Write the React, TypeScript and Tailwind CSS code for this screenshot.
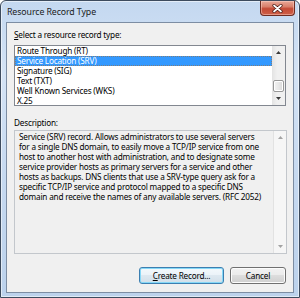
import React from "react";

const items = [
  "Route Through (RT)",
  "Service Location (SRV)",
  "Signature (SIG)",
  "Text (TXT)",
  "Well Known Services (WKS)",
  "X.25",
];

const desc = [
  "Service (SRV) record. Allows administrators to use several servers",
  "for a single DNS domain, to easily move a TCP/IP service from one",
  "host to another host with administration, and to designate some",
  "service provider hosts as primary servers for a service and other",
  "hosts as backups. DNS clients that use a SRV-type query ask for a",
  "specific TCP/IP service and protocol mapped to a specific DNS",
  "domain and receive the names of any available servers. (RFC 2052)",
];

function Up({ color }: { color: string }) {
  return (
    <svg width="5" height="3" viewBox="0 0 5 3">
      <path d="M0 3 L2.5 0 L5 3 Z" fill={color} />
    </svg>
  );
}
function Down({ color }: { color: string }) {
  return (
    <svg width="5" height="3" viewBox="0 0 5 3">
      <path d="M0 0 L2.5 3 L5 0 Z" fill={color} />
    </svg>
  );
}

export default function App() {
  return (
    <div className="w-[300px] h-[298px] flex flex-col border border-[#3d4b5e] rounded-t-[6px] overflow-hidden bg-[linear-gradient(180deg,#c4d8f0_0%,#d4e3f5_25%,#c6d9f0_60%,#bcd2ec_100%)] shadow-[inset_0_0_0_1px_rgba(255,255,255,0.55)] font-['Noto_Sans',sans-serif] text-black">
      {/* Title bar */}
      <div className="h-[21px] flex items-start justify-between pl-[6px] pr-[4px]">
        <span className="mt-[6px] text-[8.8px] leading-[10px] tracking-[-0.1px] text-[#1a1a1a]">
          Resource Record Type
        </span>
        <div className="w-[35px] h-[15px] rounded-b-[4px] border border-t-0 border-[#6e2c22] bg-[linear-gradient(180deg,#e9a898_0%,#d9806c_40%,#c44a36_55%,#cf6048_100%)] shadow-[inset_0_0_0_1px_rgba(255,220,210,0.45)] flex items-center justify-center">
          <svg width="11" height="9" viewBox="0 0 11 9">
            <path d="M2 1.5 L9 7.5 M9 1.5 L2 7.5" stroke="#4a1a14" strokeWidth="3.2" strokeLinecap="round" />
            <path d="M2 1.5 L9 7.5 M9 1.5 L2 7.5" stroke="#ffffff" strokeWidth="1.7" strokeLinecap="round" />
          </svg>
        </div>
      </div>

      {/* Client area */}
      <div className="mx-[5px] h-[271px] border border-[#7d8da3] bg-[#f0f0f0] flex flex-col pl-[7px] pr-[6px] text-[8.2px] leading-[10px] tracking-[-0.2px]">
        <div className="mt-[7px] h-[10px] whitespace-nowrap">
          <span className="underline">S</span>elect a resource record type:
        </div>

        {/* List box */}
        <div className="mt-[5px] mr-[1px] h-[61px] border border-[#828790] bg-white flex">
          <div className="flex-1 flex flex-col overflow-hidden">
            {items.map((it, i) => (
              <div
                key={it}
                className={
                  i === 1
                    ? "h-[10px] shrink-0 whitespace-nowrap bg-[#3399ff] text-white border border-dotted border-[#7d7d7d] pl-[1px] leading-[8px]"
                    : "h-[10px] shrink-0 pl-[2px] whitespace-nowrap"
                }
              >
                {it}
              </div>
            ))}
          </div>
          <div className="w-[13px] flex flex-col bg-[linear-gradient(90deg,#e3e3e3_0%,#f0f0f0_40%,#f0f0f0_100%)]">
            <div className="h-[13px] flex items-center justify-center">
              <Up color="#3a3a3a" />
            </div>
            <div className="flex-1 flex flex-col justify-end px-[1px]">
              <div className="h-[12px] rounded-[2px] border border-[#979797] bg-[linear-gradient(90deg,#f3f3f3_0%,#e8e8e8_50%,#d8d8d8_100%)] shadow-[inset_0_0_0_1px_#ffffff]" />
            </div>
            <div className="h-[13px] flex items-center justify-center">
              <Down color="#3a3a3a" />
            </div>
          </div>
        </div>

        <div className="mt-[12px] h-[10px] whitespace-nowrap">Description:</div>

        {/* Description box */}
        <div className="mt-[2px] h-[124px] border border-[#c3c7cc] bg-[#f0f0f0] flex">
          <div className="flex-1 pl-[4px] pt-[1px] overflow-hidden">
            {desc.map((l) => (
              <div key={l} className="h-[10px] whitespace-nowrap">
                {l}
              </div>
            ))}
          </div>
          <div className="w-[13px] border-l border-[#e2e2e2] bg-[#f6f6f6] flex flex-col justify-between">
            <div className="h-[13px] flex items-center justify-center">
              <Up color="#a3a3a3" />
            </div>
            <div className="h-[13px] flex items-center justify-center">
              <Down color="#a3a3a3" />
            </div>
          </div>
        </div>

        {/* Buttons */}
        <div className="mt-[13px] mr-[1px] flex justify-end gap-[6px]">
          <button className="w-[85px] h-[17px] rounded-[3px] border border-[#3c7fb1] bg-[linear-gradient(180deg,#f4f9fc_0%,#eaf2f8_50%,#dde8f0_50%,#d2dfe9_100%)] shadow-[inset_0_0_0_1px_#86d8f7] flex items-center justify-center leading-[10px] whitespace-nowrap">
            <span className="underline">C</span>reate Record...
          </button>
          <button className="w-[56px] h-[17px] rounded-[3px] border border-[#707070] bg-[linear-gradient(180deg,#f2f2f2_0%,#ebebeb_50%,#dddddd_50%,#cfcfcf_100%)] shadow-[inset_0_0_0_1px_#fcfcfc] flex items-center justify-center leading-[10px] whitespace-nowrap">
            Cancel
          </button>
        </div>
      </div>
    </div>
  );
}
